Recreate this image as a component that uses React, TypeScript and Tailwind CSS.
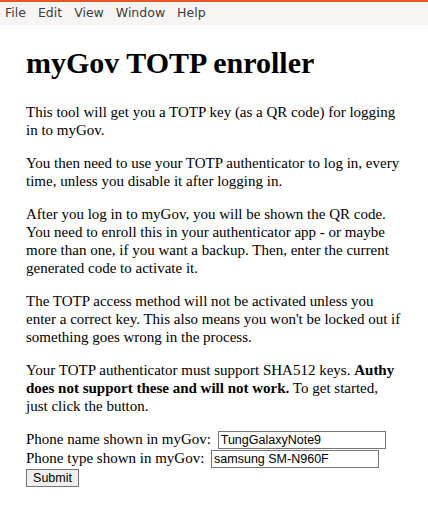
export default function App() {
  return (
    <div className="min-h-[516px] w-[428px] bg-white font-['Liberation_Serif',serif] text-black">
      <div className="border-t-2 border-[#e95420] bg-[#f6f5f4] h-[25px] flex items-center gap-[12px] px-[5px] font-['DejaVu_Sans',sans-serif] text-[12.5px] text-[#3c3c3c]">
        <span>File</span>
        <span>Edit</span>
        <span>View</span>
        <span>Window</span>
        <span>Help</span>
      </div>
      <div className="px-[26px] text-[15px] leading-[18px]">
        <h1 className="text-[30px] font-bold leading-[35px] mt-[20px] mb-[23px]">myGov TOTP enroller</h1>
        <p className="my-[15px]">This tool will get you a TOTP key (as a QR code) for logging in to myGov.</p>
        <p className="my-[15px]">You then need to use your TOTP authenticator to log in, every time, unless you disable it after logging in.</p>
        <p className="my-[15px]">
          After you log in to myGov, you will be shown the QR code. You need to enroll this in your authenticator app - or maybe
          more than one, if you want a backup. Then, enter the current generated code to activate it.
        </p>
        <p className="my-[15px]">
          The TOTP access method will not be activated unless you enter a correct key. This also means you won't be locked out if
          something goes wrong in the process.
        </p>
        <p className="my-[15px]">
          Your TOTP authenticator must support SHA512 keys. <b>Authy does not support these and will not work.</b> To get started,
          just click the button.
        </p>
        <form className="mt-[15px]">
          <label>
            Phone name shown in myGov:{" "}
            <input
              defaultValue="TungGalaxyNote9"
              className="ml-[3px] w-[168px] h-[18px] border border-[#767676] px-[2px] font-['Liberation_Sans',sans-serif] text-[12.5px] leading-none align-baseline"
            />
          </label>
          <br />
          <label>
            Phone type shown in myGov:{" "}
            <input
              defaultValue="samsung SM-N960F"
              className="ml-[3px] w-[168px] h-[18px] border border-[#767676] px-[2px] font-['Liberation_Sans',sans-serif] text-[12.5px] leading-none align-baseline"
            />
          </label>
          <br />
          <button
            type="button"
            className="h-[18px] w-[53px] border border-[#767676] bg-[#efefef] font-['Liberation_Sans',sans-serif] text-[12.5px] leading-none"
          >
            Submit
          </button>
        </form>
      </div>
    </div>
  );
}
